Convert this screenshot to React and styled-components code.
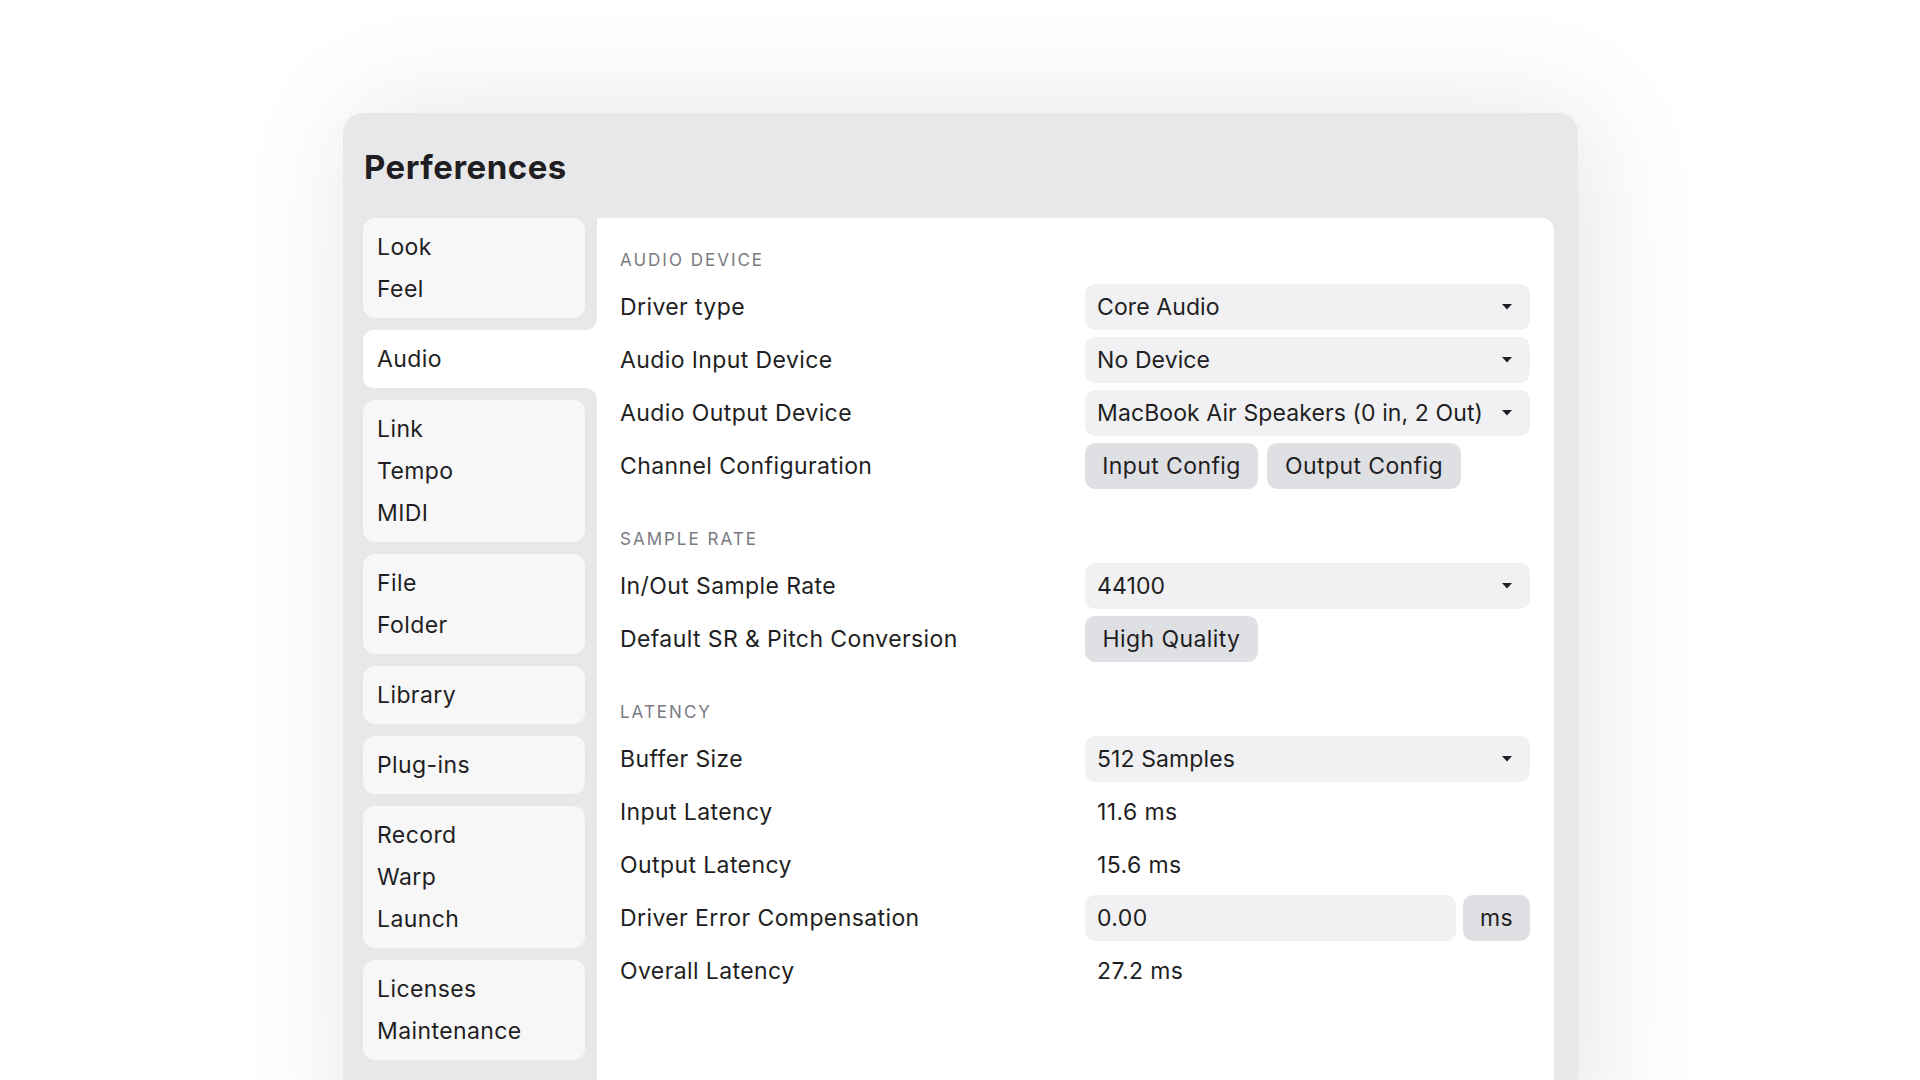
import React from "react";
import styled, { createGlobalStyle } from "styled-components";

const GlobalStyle = createGlobalStyle`
  html, body {
    margin: 0;
    padding: 0;
    background: #ffffff;
    overflow: hidden;
  }
  body {
    font-family: Inter, "Noto Sans", "Liberation Sans", sans-serif;
    color: #1f1f23;
  }
  * {
    box-sizing: border-box;
  }
`;

const Page = styled.div`
  width: 1920px;
  height: 1080px;
  padding: 113px 0 0 343px;
`;

const Window = styled.div`
  width: 1235px;
  height: 1040px;
  background: #e8e8ea;
  border-radius: 20px;
  padding: 34px 24px 0 20px;
  box-shadow: 10px 0 120px rgba(0, 0, 0, 0.11);
  display: flex;
  flex-direction: column;
`;

const Title = styled.h1`
  margin: 0 0 31px 1px;
  font-size: 33px;
  line-height: 40px;
  font-weight: 700;
  letter-spacing: 0.5px;
  color: #1f1f23;
`;

const Body = styled.div`
  flex: 1;
  display: flex;
`;

const Sidebar = styled.nav`
  width: 234px;
  flex-shrink: 0;
  display: flex;
  flex-direction: column;
  gap: 12px;
`;

const Group = styled.div`
  margin-right: 12px;
  background: #f7f7f8;
  border-radius: 12px;
  padding: 8px 0;
`;

const NavItem = styled.div`
  height: 42px;
  line-height: 42px;
  padding: 0 14px;
  font-size: 23px;
  letter-spacing: 0.4px;
  color: #1f1f23;
`;

const ActiveTab = styled.div`
  position: relative;
  background: #ffffff;
  border-radius: 10px 0 0 10px;
  padding: 8px 0;

  &::before,
  &::after {
    content: "";
    position: absolute;
    right: 0;
    width: 12px;
    height: 12px;
  }
  &::before {
    top: -12px;
    background: radial-gradient(circle at 0 0, #e8e8ea 11.5px, #ffffff 12.5px);
  }
  &::after {
    bottom: -12px;
    background: radial-gradient(circle at 0 100%, #e8e8ea 11.5px, #ffffff 12.5px);
  }
`;

const Content = styled.main`
  flex: 1;
  background: #ffffff;
  border-radius: 0 12px 0 0;
  padding: 32px 24px 0 23px;
  display: flex;
  flex-direction: column;
  gap: 40px;
`;

const Section = styled.section`
  display: flex;
  flex-direction: column;
`;

const SectionTitle = styled.div`
  font-size: 17px;
  line-height: 20px;
  letter-spacing: 2px;
  text-transform: uppercase;
  color: #7a7a82;
  margin-bottom: 14px;
`;

const Rows = styled.div`
  display: flex;
  flex-direction: column;
  gap: 7px;
`;

const Row = styled.div`
  display: grid;
  grid-template-columns: 1fr 1fr;
  column-gap: 20px;
  align-items: center;
  height: 46px;
`;

const Label = styled.div`
  font-size: 23px;
  letter-spacing: 0.4px;
  color: #1f1f23;
`;

const Control = styled.div`
  display: flex;
  gap: ${(p) => p.$gap || 9}px;
  height: 46px;
  align-items: stretch;
`;

const Select = styled.div`
  flex: 1;
  display: flex;
  align-items: center;
  justify-content: space-between;
  background: #f1f1f3;
  border-radius: 10px;
  padding: 0 18px 0 12px;
  font-size: 23px;
  letter-spacing: 0.1px;
  color: #1f1f23;
`;

const Field = styled.div`
  flex: 1;
  display: flex;
  align-items: center;
  background: #f1f1f3;
  border-radius: 10px;
  padding: 0 12px;
  font-size: 23px;
  letter-spacing: 0.4px;
`;

const Button = styled.div`
  display: flex;
  align-items: center;
  justify-content: center;
  background: #dfe0e4;
  border-radius: 10px;
  padding: 0 16px;
  font-size: 23px;
  letter-spacing: 0.4px;
  color: #1f1f23;
  min-width: ${(p) => p.$min || 0}px;
`;

const Value = styled.div`
  padding-left: 12px;
  font-size: 23px;
  letter-spacing: 0.4px;
  color: #1f1f23;
`;

const Caret = () => (
  <svg width="10" height="6" viewBox="0 0 10 6">
    <path d="M0 0 L10 0 L5 5.5 Z" fill="#1f1f23" />
  </svg>
);

const nav = [
  ["Look", "Feel"],
  "active",
  ["Link", "Tempo", "MIDI"],
  ["File", "Folder"],
  ["Library"],
  ["Plug-ins"],
  ["Record", "Warp", "Launch"],
  ["Licenses", "Maintenance"],
];

function Dropdown({ children }) {
  return (
    <Control>
      <Select>
        <span>{children}</span>
        <Caret />
      </Select>
    </Control>
  );
}

export default function App() {
  return (
    <>
      <GlobalStyle />
      <Page>
        <Window>
          <Title>Perferences</Title>
          <Body>
            <Sidebar>
              {nav.map((g, i) =>
                g === "active" ? (
                  <ActiveTab key={i}>
                    <NavItem>Audio</NavItem>
                  </ActiveTab>
                ) : (
                  <Group key={i}>
                    {g.map((item) => (
                      <NavItem key={item}>{item}</NavItem>
                    ))}
                  </Group>
                )
              )}
            </Sidebar>
            <Content>
              <Section>
                <SectionTitle>Audio Device</SectionTitle>
                <Rows>
                  <Row>
                    <Label>Driver type</Label>
                    <Dropdown>Core Audio</Dropdown>
                  </Row>
                  <Row>
                    <Label>Audio Input Device</Label>
                    <Dropdown>No Device</Dropdown>
                  </Row>
                  <Row>
                    <Label>Audio Output Device</Label>
                    <Dropdown>MacBook Air Speakers (0 in, 2 Out)</Dropdown>
                  </Row>
                  <Row>
                    <Label>Channel Configuration</Label>
                    <Control>
                      <Button $min={173}>Input Config</Button>
                      <Button $min={194}>Output Config</Button>
                    </Control>
                  </Row>
                </Rows>
              </Section>
              <Section>
                <SectionTitle>Sample Rate</SectionTitle>
                <Rows>
                  <Row>
                    <Label>In/Out Sample Rate</Label>
                    <Dropdown>44100</Dropdown>
                  </Row>
                  <Row>
                    <Label>Default SR &amp; Pitch Conversion</Label>
                    <Control>
                      <Button $min={173}>High Quality</Button>
                    </Control>
                  </Row>
                </Rows>
              </Section>
              <Section>
                <SectionTitle>Latency</SectionTitle>
                <Rows>
                  <Row>
                    <Label>Buffer Size</Label>
                    <Dropdown>512 Samples</Dropdown>
                  </Row>
                  <Row>
                    <Label>Input Latency</Label>
                    <Value>11.6 ms</Value>
                  </Row>
                  <Row>
                    <Label>Output Latency</Label>
                    <Value>15.6 ms</Value>
                  </Row>
                  <Row>
                    <Label>Driver Error Compensation</Label>
                    <Control $gap={7}>
                      <Field>0.00</Field>
                      <Button $min={67}>ms</Button>
                    </Control>
                  </Row>
                  <Row>
                    <Label>Overall Latency</Label>
                    <Value>27.2 ms</Value>
                  </Row>
                </Rows>
              </Section>
            </Content>
          </Body>
        </Window>
      </Page>
    </>
  );
}
